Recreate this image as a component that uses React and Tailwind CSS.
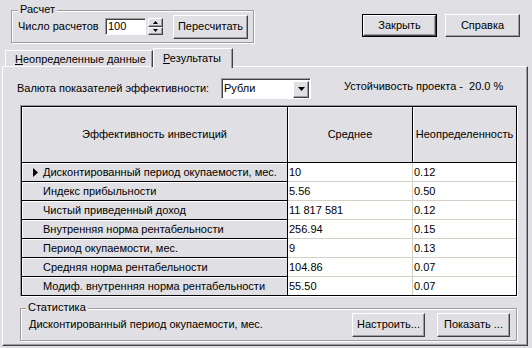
const raised =
  "bg-[#e0dfe3] border border-t-white border-l-white border-r-[#404040] border-b-[#404040] shadow-[inset_-1px_-1px_0_#9d9da1]";
const sunken =
  "bg-white border border-t-[#9d9da1] border-l-[#9d9da1] border-r-white border-b-white shadow-[inset_1px_1px_0_#404040]";
const etched =
  "border border-[#9d9da1] shadow-[inset_1px_1px_0_#ffffff,1px_1px_0_#ffffff]";

const rows = [
  ["Дисконтированный период окупаемости, мес.", "10", "0.12"],
  ["Индекс прибыльности", "5.56", "0.50"],
  ["Чистый приведенный доход", "11 817 581", "0.12"],
  ["Внутренняя норма рентабельности", "256.94", "0.15"],
  ["Период окупаемости, мес.", "9", "0.13"],
  ["Средняя норма рентабельности", "104.86", "0.07"],
  ["Модиф. внутренняя норма рентабельности", "55.50", "0.07"],
];

function Btn({ className, children }) {
  return (
    <button type="button" className={`${raised} flex items-center justify-center leading-[13px] ${className}`}>
      {children}
    </button>
  );
}

function Arrow({ up, w = 7, h = 4 }) {
  return (
    <svg width={w} height={h} viewBox={`0 0 ${w} ${h}`}>
      <polygon points={up ? `${w / 2},0 ${w},${h} 0,${h}` : `0,0 ${w},0 ${w / 2},${h}`} fill="black" />
    </svg>
  );
}

export default function App() {
  return (
    <div className="w-[532px] h-[348px] overflow-hidden bg-[#e0dfe3] text-black text-[11px] leading-[13px] font-['Liberation_Sans',Arial,sans-serif]">
      {/* top: Расчет group + dialog buttons */}
      <div className="flex items-start">
        <div className={`relative ml-[11px] mt-[10px] w-[243px] h-[33px] ${etched} flex items-center pl-[6px]`}>
          <span className="absolute -top-[8px] left-[6px] px-[2px] bg-[#e0dfe3]">Расчет</span>
          <span className="w-[87px] whitespace-nowrap">Число расчетов</span>
          <div className={`${sunken} w-[41px] h-[17px] flex items-center pl-[2px]`}>100</div>
          <div className="ml-[2px] w-[15px] h-[17px] flex flex-col">
            <div className={`${raised} flex-1 flex items-center justify-center`}>
              <Arrow up w={5} h={3} />
            </div>
            <div className={`${raised} flex-1 flex items-center justify-center`}>
              <Arrow w={5} h={3} />
            </div>
          </div>
          <Btn className="ml-[10px] w-[75px] h-[24px]">Пересчитать</Btn>
        </div>
        <div className="ml-auto mr-[12px] mt-[14px] flex gap-[8px]">
          <div className="w-[75px] h-[23px] border border-black">
            <Btn className="w-full h-full">Закрыть</Btn>
          </div>
          <Btn className="w-[75px] h-[23px]">Справка</Btn>
        </div>
      </div>

      {/* tabs */}
      <div className="mt-[4px] h-[20px] flex items-end pl-[5px]">
        <div className="w-[148px] h-[17px] border-t border-l border-r border-t-white border-l-white border-r-[#404040] shadow-[inset_-1px_0_0_#9d9da1] pl-[9px] pt-[2px] whitespace-nowrap">
          <span className="underline">Н</span>еопределенные данные
        </div>
        <div className="relative z-10 w-[80px] h-[20px] -mb-[1px] bg-[#e0dfe3] border-t border-l border-r border-t-white border-l-white border-r-[#404040] shadow-[inset_-1px_0_0_#9d9da1] pl-[9px] pt-[3px] whitespace-nowrap">
          <span className="underline">Р</span>езультаты
        </div>
      </div>

      {/* panel */}
      <div className="-mt-[1px] ml-[2px] w-[526px] h-[280px] border border-t-white border-l-white border-r-[#404040] border-b-[#404040] shadow-[inset_-1px_-1px_0_#9d9da1] flex flex-col">
        <div className="mt-[11px] h-[21px] flex items-center pl-[14px]">
          <span className="w-[204px] whitespace-nowrap">Валюта показателей эффективности:</span>
          <div className={`${sunken} w-[90px] h-[21px] flex items-center justify-between pl-[2px] pr-[1px]`}>
            <span>Рубли</span>
            <div className={`${raised} w-[16px] h-[17px] mt-[1px] flex items-center justify-center`}>
              <Arrow />
            </div>
          </div>
          <span className="ml-[33px] self-start mt-[2px] whitespace-pre">Устойчивость проекта -  20.0 %</span>
        </div>

        {/* grid */}
        <div className="ml-[17px] mt-[6px] w-[498px] h-[192px] border border-t-[#9d9da1] border-l-[#9d9da1] border-r-white border-b-white">
          <div className="h-full border border-black bg-white flex flex-col">
            <div className="grid grid-cols-[266px_125px_1fr] h-[56px] border-b border-black bg-[#e0dfe3]">
              <div className="border-r border-black flex items-center justify-center shadow-[inset_1px_1px_0_#ffffff]">
                Эффективность инвестиций
              </div>
              <div className="border-r border-black flex items-center justify-center shadow-[inset_1px_1px_0_#ffffff]">
                Среднее
              </div>
              <div className="flex items-center justify-center whitespace-nowrap shadow-[inset_1px_1px_0_#ffffff]">
                Неопределенность
              </div>
            </div>
            {rows.map((r, i) => {
              const last = i === rows.length - 1;
              return (
                <div key={i} className={`grid grid-cols-[266px_125px_1fr] ${last ? "h-[18px]" : "h-[19px]"}`}>
                  <div
                    className={`bg-[#e0dfe3] border-r border-black shadow-[inset_1px_1px_0_#ffffff] flex items-center pl-[11px] overflow-hidden whitespace-nowrap ${
                      last ? "" : "border-b border-b-black"
                    }`}
                  >
                    <span className="w-[10px] shrink-0 flex items-center">
                      {i === 0 && (
                        <svg width="5" height="9" viewBox="0 0 5 9">
                          <polygon points="0,0 5,4.5 0,9" fill="black" />
                        </svg>
                      )}
                    </span>
                    <span>{r[0]}</span>
                  </div>
                  <div className={`border-r border-[#d4d0c8] flex items-center pl-[1px] ${last ? "" : "border-b"}`}>{r[1]}</div>
                  <div className={`border-[#d4d0c8] flex items-center pl-[1px] ${last ? "" : "border-b"}`}>{r[2]}</div>
                </div>
              );
            })}
          </div>
        </div>

        {/* Статистика */}
        <div className={`relative ml-[17px] mt-[11px] w-[497px] h-[33px] ${etched} flex items-center pl-[8px] pr-[6px]`}>
          <span className="absolute -top-[8px] left-[5px] px-[2px] bg-[#e0dfe3]">Статистика</span>
          <span className="whitespace-nowrap">Дисконтированный период окупаемости, мес.</span>
          <Btn className="ml-auto w-[73px] h-[24px]">Настроить...</Btn>
          <Btn className="ml-[12px] w-[73px] h-[24px]">Показать ...</Btn>
        </div>
      </div>
    </div>
  );
}
